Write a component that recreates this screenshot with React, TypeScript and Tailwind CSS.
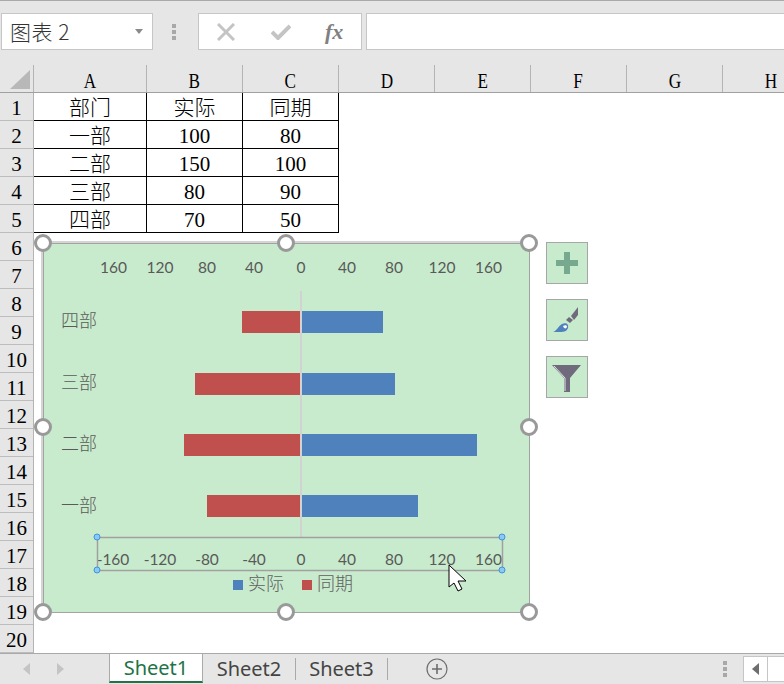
import React from 'react'

const serif = "font-['Liberation_Serif','Noto_Sans_CJK_SC',serif]"

const columns = [
  { name: 'A', width: 'w-[113px]' },
  { name: 'B', width: 'w-[96px]' },
  { name: 'C', width: 'w-[96px]' },
  { name: 'D', width: 'w-[96px]' },
  { name: 'E', width: 'w-[96px]' },
  { name: 'F', width: 'w-[96px]' },
  { name: 'G', width: 'w-[96px]' },
  { name: 'H', width: 'w-[96px]' },
]

const tableRows = [
  ['部门', '实际', '同期'],
  ['一部', '100', '80'],
  ['二部', '150', '100'],
  ['三部', '80', '90'],
  ['四部', '70', '50'],
]

const rowNumbers = Array.from({ length: 20 }, (_, i) => i + 1)

const bars = [
  { label: '四部', y: 311, labelY: 327, red: 242, blue: 383 },
  { label: '三部', y: 373, labelY: 389, red: 195, blue: 395 },
  { label: '二部', y: 434, labelY: 450, red: 184, blue: 477 },
  { label: '一部', y: 495, labelY: 512, red: 207, blue: 418 },
]

const axisX = [113.5, 160, 207, 254, 301, 347, 394, 442, 488.5]
const topLabels = ['160', '120', '80', '40', '0', '40', '80', '120', '160']
const bottomLabels = ['-160', '-120', '-80', '-40', '0', '40', '80', '120', '160']

const handles = [
  'left-[-10px] top-[-10px]',
  'left-[233px] top-[-10px]',
  'left-[476px] top-[-10px]',
  'left-[-10px] top-[174px]',
  'left-[476px] top-[174px]',
  'left-[-10px] top-[359px]',
  'left-[233px] top-[359px]',
  'left-[476px] top-[359px]',
]

const Dots = () => (
  <>
    <span className="w-[4px] h-[4px] bg-[#a8a8a8]" />
    <span className="w-[4px] h-[4px] bg-[#a8a8a8]" />
    <span className="w-[4px] h-[4px] bg-[#a8a8a8]" />
  </>
)

const FormulaBar = () => (
  <div className="h-[50px] shrink-0 bg-[#e6e6e6] border-t border-[#a9a9a9] pt-3 flex items-stretch">
    <div className="ml-px w-[152px] h-[37px] bg-white border border-[#c6c6c6] flex items-center justify-between pl-2 pr-[9px]">
      <span className="font-['Noto_Sans_CJK_SC','Noto_Sans',sans-serif] font-light text-[21px] text-[#333] tracking-[0.5px]">图表 2</span>
      <svg width="8" height="5" viewBox="0 0 8 5"><path d="M0 0h8L4 5z" fill="#8a8a8a" /></svg>
    </div>
    <div className="w-[42px] flex flex-col items-center justify-center gap-[2px]">
      <Dots />
    </div>
    <div className="ml-[3px] w-[164px] h-[37px] bg-white border border-[#c6c6c6] flex items-center relative">
      <svg className="ml-[18px]" width="18" height="18" viewBox="0 0 18 18">
        <path d="M1 1l16 16M17 1L1 17" stroke="#c4c4c4" strokeWidth="3" fill="none" />
      </svg>
      <svg className="ml-[36px]" width="20" height="16" viewBox="0 0 20 16">
        <path d="M1 8l6 6L19 2" stroke="#c4c4c4" strokeWidth="4" fill="none" />
      </svg>
      <span className="ml-[34px] font-['Liberation_Serif',serif] italic font-bold text-[22px] text-[#808080] leading-none">fx</span>
    </div>
    <div className="ml-[4px] flex-1 h-[37px] bg-white border-y border-l border-[#c6c6c6]" />
  </div>
)

const ColumnHeader = () => (
  <div className="h-[43px] shrink-0 bg-[#e6e6e6] pt-[15px]">
    <div className="h-[28px] flex border-b border-[#a0a0a0]">
      <div className="w-[34px] shrink-0 border-r border-[#b4b4b4] relative">
        <svg className="absolute left-[10px] top-[5px]" width="20" height="19" viewBox="0 0 20 19">
          <path d="M20 0v19H0z" fill="#b8b8b8" />
        </svg>
      </div>
      {columns.map((c) => (
        <div
          key={c.name}
          className={`${c.width} shrink-0 border-r border-[#b4b4b4] flex items-center justify-center pt-[4px] ${serif} text-[22px] text-black`}
        >
          <span className="inline-block scale-x-[0.78]">{c.name}</span>
        </div>
      ))}
    </div>
  </div>
)

const Sheet = () => (
  <div className="h-[560px] shrink-0 relative bg-white">
    <div className="flex">
      <div className="w-[34px] shrink-0 bg-[#e6e6e6] border-r border-[#b4b4b4]">
        {rowNumbers.map((n) => (
          <div
            key={n}
            className={`h-[28px] border-b border-[#bdbdbd] flex items-center justify-center pt-[4px] ${serif} text-[21px] text-black`}
          >
            {n}
          </div>
        ))}
      </div>
      <div>
        {tableRows.map((row, i) => (
          <div key={i} className="flex h-[28px]">
            {row.map((cell, j) => (
              <div
                key={j}
                className={`${j === 0 ? 'w-[113px]' : 'w-[96px]'} border-r border-b border-black flex items-center justify-center pt-[5px] ${serif} font-light text-[21px] text-black`}
              >
                {cell}
              </div>
            ))}
          </div>
        ))}
      </div>
    </div>
    <Chart />
    <ChartButtons />
  </div>
)

const Chart = () => (
  <div className="absolute left-[43px] top-[150px] w-[487px] h-[370px] bg-[#c8ebcd] border border-[#a3a3a3] shadow-[-2px_-2px_0_#d4d4d4]">
    <svg
      className="absolute left-[-1px] top-[-1px]"
      width="487"
      height="370"
      viewBox="43 243 487 370"
    >
      <g className="font-['Lato','Noto_Sans_CJK_SC',sans-serif]" fontSize="15.5" fill="#595959" textAnchor="middle">
        {axisX.map((x, i) => (
          <text key={`t${i}`} x={x} y="273">{topLabels[i]}</text>
        ))}
        {axisX.map((x, i) => (
          <text key={`b${i}`} x={i === 0 ? 113 : x} y="565">{bottomLabels[i]}</text>
        ))}
      </g>
      <rect x="300" y="291" width="2" height="246" fill="#d2d2d2" />
      {bars.map((b) => (
        <g key={b.label}>
          <rect x={b.red} y={b.y} width={300 - b.red} height="22" fill="#c0504d" />
          <rect x="302" y={b.y} width={b.blue - 302} height="22" fill="#4f81bd" />
          <text
            x="61"
            y={b.labelY}
            fontSize="18"
            fill="#5a5a5a"
            className="font-['Noto_Sans_CJK_SC',sans-serif] font-light"
          >
            {b.label}
          </text>
        </g>
      ))}
      <rect x="97.5" y="537.5" width="405" height="33" fill="none" stroke="#a0a0a0" strokeWidth="1.5" />
      {[[97, 537], [502, 537], [97, 570], [502, 570]].map(([x, y]) => (
        <circle key={`${x}-${y}`} cx={x} cy={y} r="3" fill="#8cc8f4" stroke="#3f93dc" />
      ))}
      <g className="font-['Noto_Sans_CJK_SC',sans-serif] font-light" fontSize="18" fill="#606060">
        <rect x="233" y="580" width="10" height="10" fill="#4f81bd" />
        <text x="248" y="590">实际</text>
        <rect x="302" y="580" width="10" height="10" fill="#c0504d" />
        <text x="317" y="590">同期</text>
      </g>
      <path
        d="M449 565V587L454 583L458 591L462 589L458 581H466Z"
        fill="#fff"
        stroke="#000"
        strokeWidth="1"
      />
    </svg>
    {handles.map((h) => (
      <div key={h} className={`absolute ${h} w-[18px] h-[18px] rounded-full bg-white border-[3px] border-[#999]`} />
    ))}
  </div>
)

const ChartButtons = () => (
  <div className="absolute left-[546px] top-[149px] flex flex-col gap-[15px]">
    <div className="w-[42px] h-[42px] bg-[#c8ebcd] border border-[#a6a6a6]">
      <svg width="40" height="40" viewBox="0 0 40 40">
        <path d="M17 9h6v8h8v6h-8v8h-6v-8H9v-6h8z" fill="#77a98f" />
      </svg>
    </div>
    <div className="w-[42px] h-[42px] bg-[#c8ebcd] border border-[#a6a6a6]">
      <svg width="40" height="40" viewBox="0 0 40 40">
        <path d="M6 32C10 31 11 26 15 24C19 22 22 24 21 28C20 31 17 32 14 32Z" fill="#4f81bd" />
        <path d="M16 26C18 25 20 25 20 27C19 29 17 29 16 26Z" fill="#fff" />
        <path d="M19 20l3-3 4 3-3 3z" fill="#6f6a7c" />
        <path d="M24 16L31 7V15L27 20Z" fill="#6f6a7c" />
      </svg>
    </div>
    <div className="w-[42px] h-[42px] bg-[#c8ebcd] border border-[#a6a6a6]">
      <svg width="40" height="40" viewBox="0 0 40 40">
        <path d="M5 8H34L23 21V35H17V21Z" fill="#6f6a7c" />
        <path d="M7 9L18 21V34" fill="none" stroke="#e4e4e4" strokeWidth="1" />
      </svg>
    </div>
  </div>
)

const TabBar = () => (
  <div className="h-[31px] shrink-0 bg-[#e6e6e6] border-t border-[#a9a9a9] flex items-stretch relative">
    <div className="w-[109px] flex items-center pl-[23px] gap-[27px]">
      <svg width="7" height="12" viewBox="0 0 7 12"><path d="M7 0v12L0 6z" fill="#c4c4c4" /></svg>
      <svg width="7" height="12" viewBox="0 0 7 12"><path d="M0 0v12l7-6z" fill="#c4c4c4" /></svg>
    </div>
    <div className="w-[94px] mt-[-1px] bg-white border-x border-t border-[#a9a9a9] border-b-2 border-b-[#217346] mb-px flex items-center justify-center font-['Noto_Sans',sans-serif] text-[20px] text-[#217346]">
      Sheet1
    </div>
    <div className="w-[92px] flex items-center justify-center relative font-['Noto_Sans',sans-serif] text-[20px] text-[#444]">
      Sheet2
      <span className="absolute right-[-1px] top-[4px] h-[22px] w-px bg-[#a9a9a9]" />
    </div>
    <div className="w-[93px] flex items-center justify-center relative font-['Noto_Sans',sans-serif] text-[20px] text-[#444]">
      Sheet3
      <span className="absolute right-0 top-[4px] h-[22px] w-px bg-[#a9a9a9]" />
    </div>
    <div className="ml-[38px] flex items-center">
      <svg width="22" height="22" viewBox="0 0 22 22">
        <circle cx="11" cy="11" r="10" fill="none" stroke="#6e6e6e" strokeWidth="1.2" />
        <path d="M11 6v10M6 11h10" stroke="#6e6e6e" strokeWidth="1.6" />
      </svg>
    </div>
    <div className="ml-[275px] flex flex-col justify-center gap-[2px]">
      <Dots />
    </div>
    <div className="ml-[16px] my-[2px] w-[25px] bg-white border border-[#c6c6c6] flex items-center justify-center">
      <svg width="7" height="12" viewBox="0 0 7 12"><path d="M7 0v12L0 6z" fill="#6e6e6e" /></svg>
    </div>
    <div className="my-[2px] flex-1 bg-white border-y border-[#c6c6c6]" />
  </div>
)

export default function App() {
  return (
    <div className="w-[784px] h-[684px] overflow-hidden flex flex-col bg-white">
      <FormulaBar />
      <ColumnHeader />
      <Sheet />
      <TabBar />
    </div>
  )
}
